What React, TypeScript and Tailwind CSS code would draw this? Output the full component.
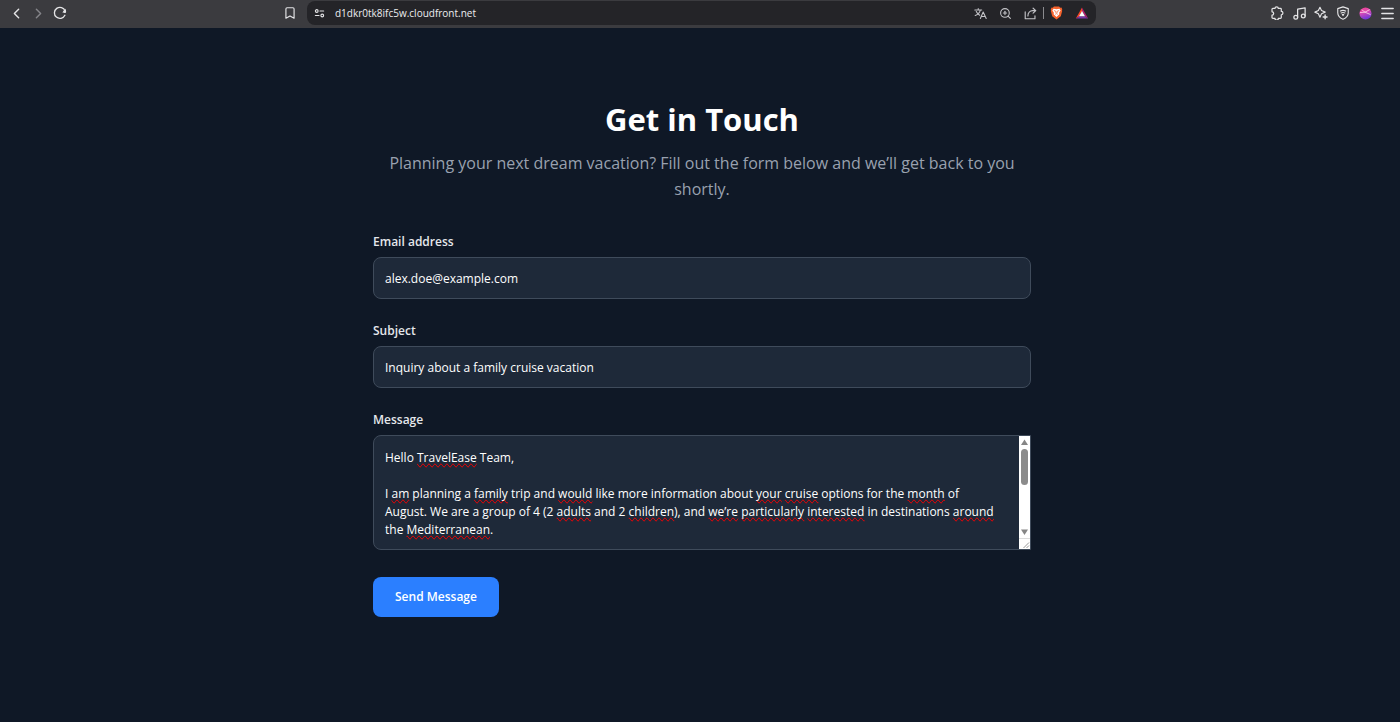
import { useRef, useState } from "react";
import {
  Bookmark,
  ChevronLeft,
  ChevronRight,
  Menu,
  Music,
  ZoomIn,
} from "lucide-react";

const iconButton = "flex h-6 w-[22px] items-center justify-center";
const barButton = "flex h-6 w-[25px] items-center justify-center";
const inputStyle =
  "block h-[42px] w-full rounded-lg border border-[#3f4b5b] bg-[#1e2939] px-[11px] text-[12px] text-white outline-none focus:border-blue-500";
const labelStyle = "mb-[5px] block text-[12px] leading-5 font-semibold text-gray-200";

// "*" marks the words that the spell checker underlines
const messageMarkup = `Hello *TravelEase* Team,

I *am* planning a *family* trip and *would* like more information about *your* *cruise* options for the *month* of August. We are a group of 4 (2 *adults* and 2 *children*), and *we’re* *particularly* *interested* in destinations *around* the *Mediterranean*.`;

const initialMessage = messageMarkup.replaceAll("*", "");
const flagged = messageMarkup.split("*").filter((_, i) => i % 2 === 1);

function ReloadIcon() {
  return (
    <svg viewBox="0 0 16 16" className="h-[14px] w-[14px]" fill="none" stroke="currentColor" strokeWidth="1.5" strokeLinecap="round">
      <path d="M13.6 10.6A6.3 6.3 0 1 1 13.8 5.6" />
      <path d="M14.7 3.2v4.1h-4.1z" fill="currentColor" stroke="none" />
      <circle cx="13.4" cy="6.5" r="1.6" fill="currentColor" stroke="none" />
    </svg>
  );
}

function SiteSettingsIcon() {
  return (
    <svg viewBox="0 0 12 12" className="h-[11px] w-[11px]" fill="none" stroke="currentColor" strokeWidth="1.2" strokeLinecap="round">
      <circle cx="3" cy="3.3" r="1.5" />
      <path d="M6.5 3.3h4" />
      <circle cx="9" cy="8.2" r="1.5" />
      <path d="M1.5 8.2h4" />
    </svg>
  );
}

function TranslateIcon() {
  return (
    <svg viewBox="0 0 16 16" className="h-[13px] w-[13px]" fill="none" stroke="currentColor" strokeWidth="1.3" strokeLinecap="round" strokeLinejoin="round">
      <path d="M1 3.8h8.5M5.2 2v1.8M7.8 3.8C7 7 4.5 9.3 1.5 10.4M2.8 5.6c1 2.2 2.4 3.6 4.2 4.6" />
      <path d="M7.8 14.2l3.5-8 3.7 8M9 11.6h4.7" />
    </svg>
  );
}

function ShareIcon() {
  return (
    <svg viewBox="0 0 16 16" className="h-[13px] w-[13px]" fill="none" stroke="currentColor" strokeWidth="1.4" strokeLinecap="round" strokeLinejoin="round">
      <path d="M1.5 6v8.5h12V11" />
      <path d="M4.8 11c0-4 2.5-6.5 6-6.5H14M11.2 1.5l3.3 3-3.3 3" />
    </svg>
  );
}

function BraveIcon() {
  return (
    <svg viewBox="0 0 14 16" className="h-[14px] w-[13px]">
      <path d="M4 .7h6l1.2 1.2 1.4-.1 1 2-.4 1 .3 1-1.6 6L7 15.5 2.1 11.8.5 5.8l.3-1-.4-1 1-2 1.4.1z" fill="#f4622c" />
      <path d="M3.6 3.2 7 3.8l3.4-.6 1.3 2-1.7 2.6.3 1.5L7 12.6 3.7 9.3 4 7.8 2.3 5.2z" fill="#fff" />
      <path d="M4 5.2l2.1.7.3 2.2M10 5.2l-2.1.7-.3 2.2M5.5 9.5 7 8.7l1.5.8" fill="none" stroke="#f4622c" strokeWidth=".8" />
    </svg>
  );
}

function BatIcon() {
  return (
    <svg viewBox="0 0 16 14" className="h-3 w-[14px]">
      <path d="M8 .5V5L4.6 10.8.8 13.3z" fill="#ff4724" />
      <path d="M8 .5 15.2 13.3 11.4 10.8 8 5z" fill="#b0206e" />
      <path d="M.8 13.3l3.8-2.5h6.8l3.8 2.5z" fill="#7a35a5" />
      <path d="M8 4.8l3.5 6.1h-7z" fill="#fff" />
    </svg>
  );
}

function ExtensionsIcon() {
  return (
    <svg viewBox="0 0 16 16" className="h-[14px] w-[14px]" fill="none" stroke="currentColor" strokeWidth="1.4" strokeLinejoin="round">
      <path d="M3.3 2.8h2.4a1.9 1.9 0 0 1 3.8 0h2.4a1 1 0 0 1 1 1v2.4a1.9 1.9 0 0 1 0 3.8v3.2a1 1 0 0 1-1 1H9.5a1.9 1.9 0 0 1-3.8 0H3.3a1 1 0 0 1-1-1V10.400a1.9 1.9 0 0 0 0-3.800V3.8a1 1 0 0 1 1-1z" />
    </svg>
  );
}

function LeoIcon() {
  return (
    <svg viewBox="0 0 16 16" className="h-[14px] w-[14px]" fill="none" stroke="currentColor" strokeWidth="1.3" strokeLinejoin="round" strokeLinecap="round">
      <path d="M6.8 1.5 8.6 5.2 12.8 7l-4.2 1.800L6.8 12.8 5 8.8 1 7l4-1.8z" />
      <path d="M12.7 10.3v4.4M10.5 12.5h4.4" strokeWidth="1.6" />
    </svg>
  );
}

function VpnIcon() {
  return (
    <svg viewBox="0 0 16 16" className="h-[14px] w-[14px]" fill="none" stroke="currentColor" strokeWidth="1.3" strokeLinecap="round" strokeLinejoin="round">
      <path d="M8 1l6 2v4.6c0 3.5-2.5 6-6 7.6-3.5-1.6-6-4.1-6-7.6V3z" />
      <path d="M5 5.8c1.9-1 4.1-1 6 0M5.9 8c1.3-.7 2.9-.7 4.2 0" />
      <path d="M7.2 9.8h1.6L8 10.7z" />
    </svg>
  );
}

function ProfileIcon() {
  return (
    <svg viewBox="0 0 14 14" className="h-[13px] w-[13px]">
      <defs>
        <linearGradient id="profile" x1="0" y1="0" x2="0.3" y2="1">
          <stop offset="0" stopColor="#f0408c" />
          <stop offset="0.45" stopColor="#e04bb4" />
          <stop offset="1" stopColor="#7438d8" />
        </linearGradient>
      </defs>
      <circle cx="7" cy="7" r="6.5" fill="url(#profile)" />
      <path d="M1 6 6.5 5.6l5-2.8M3 3l3.5 2.6 6 2.6" fill="none" stroke="#fbd0ea" strokeWidth=".9" />
    </svg>
  );
}

function BrowserBar() {
  return (
    <header className="flex h-7 items-center bg-[#3b3b3f] pb-0.5 text-[#e4e4e6]">
      <div className="flex w-[307px] shrink-0 items-center justify-between pr-[6px] pl-[5px]">
        <div className="flex">
          <button aria-label="Back" className={iconButton}>
            <ChevronLeft size={17} strokeWidth={2} />
          </button>
          <button aria-label="Forward" className={`${iconButton} text-[#85858a]`}>
            <ChevronRight size={17} strokeWidth={2} />
          </button>
          <button aria-label="Reload" className={iconButton}>
            <ReloadIcon />
          </button>
        </div>
        <button aria-label="Bookmark" className={iconButton}>
          <Bookmark size={14} strokeWidth={2} />
        </button>
      </div>

      <div className="flex h-6 min-w-0 flex-1 items-center rounded-lg bg-[#242428] pr-[2px]">
        <button aria-label="Site settings" className="flex h-6 w-6 items-center justify-center">
          <SiteSettingsIcon />
        </button>
        <input
          aria-label="Address"
          defaultValue="d1dkr0tk8ifc5w.cloudfront.net"
          className="min-w-0 flex-1 bg-transparent pl-1 text-[10px] text-[#ededef] outline-none"
        />
        <div className="flex items-center text-[#c4c4c8]">
          <button aria-label="Translate" className={barButton}>
            <TranslateIcon />
          </button>
          <button aria-label="Zoom" className={barButton}>
            <ZoomIn size={13} strokeWidth={2} />
          </button>
          <button aria-label="Share" className={barButton}>
            <ShareIcon />
          </button>
          <span className="h-3 w-px bg-[#8a8a8e]" />
          <button aria-label="Brave Shields" className={barButton}>
            <BraveIcon />
          </button>
          <button aria-label="Brave Rewards" className={barButton}>
            <BatIcon />
          </button>
        </div>
      </div>

      <div className="flex w-[304px] shrink-0 justify-end pr-[2px]">
        <button aria-label="Extensions" className={iconButton}>
          <ExtensionsIcon />
        </button>
        <button aria-label="Playlist" className={iconButton}>
          <Music size={15} strokeWidth={2} />
        </button>
        <button aria-label="Assistant" className={iconButton}>
          <LeoIcon />
        </button>
        <button aria-label="VPN" className={iconButton}>
          <VpnIcon />
        </button>
        <button aria-label="Profile" className={iconButton}>
          <ProfileIcon />
        </button>
        <button aria-label="Menu" className={iconButton}>
          <Menu size={17} strokeWidth={2} />
        </button>
      </div>
    </header>
  );
}

function MessageField() {
  const [message, setMessage] = useState(initialMessage);
  const backdrop = useRef<HTMLDivElement>(null);

  const handleScroll = (e: React.UIEvent<HTMLTextAreaElement>) => {
    if (backdrop.current) backdrop.current.scrollTop = e.currentTarget.scrollTop;
  };

  return (
    <div>
      <label htmlFor="message" className={labelStyle}>
        Message
      </label>
      <div className="relative flex h-[115px] overflow-hidden rounded-l-lg border border-[#3f4b5b] bg-[#1e2939]">
        <div className="relative min-w-0 flex-1">
          {/* spell check marks, scrolled together with the textarea */}
          <div
            ref={backdrop}
            aria-hidden="true"
            className="pointer-events-none absolute inset-0 overflow-hidden pt-[13px] pr-[18px] pb-2 pl-[11px] text-[12px] leading-[18px] break-words whitespace-pre-wrap text-transparent select-none"
          >
            {message.split(/([\s(),.]+)/).map((word, i) =>
              flagged.includes(word) ? (
                <span key={i} className="[text-decoration-line:spelling-error]">
                  {word}
                </span>
              ) : (
                word
              )
            )}
          </div>
          <textarea
            id="message"
            name="message"
            value={message}
            spellCheck={false}
            onChange={(e) => setMessage(e.target.value)}
            onScroll={handleScroll}
            className="relative block h-full w-full resize-none bg-transparent pt-[13px] pr-[18px] pb-2 pl-[11px] text-[12px] leading-[18px] text-white outline-none [scrollbar-width:none]"
          />
        </div>
        <div aria-hidden="true" className="flex w-[11px] flex-col items-center bg-white">
          <svg viewBox="0 0 11 12" className="h-3 w-[11px]">
            <path d="M5.5 3.5 9 9H2z" fill="#868686" />
          </svg>
          <div className="mt-px h-9 w-[7px] rounded-full bg-[#8b8b8b]" />
          <div className="flex-1" />
          <svg viewBox="0 0 11 12" className="h-3 w-[11px]">
            <path d="M5.5 9 2 3.5h7z" fill="#868686" />
          </svg>
          <svg viewBox="0 0 11 11" className="h-[11px] w-[11px]">
            <path d="M0 .5h11" stroke="#dcdcdc" />
            <path d="M4.5 10l5.5-5.5M7.5 10 10 7.5" stroke="#999" />
          </svg>
        </div>
      </div>
    </div>
  );
}

export default function App() {
  const [email, setEmail] = useState("alex.doe@example.com");
  const [subject, setSubject] = useState("Inquiry about a family cruise vacation");

  return (
    <div className="min-h-screen bg-[#0f1826] font-['Open_Sans','Noto_Sans',sans-serif]">
      <BrowserBar />
      <main className="pt-[73px] pb-20 pl-1">
        <section className="mx-auto max-w-[658px]">
          <div className="mb-[30px] text-center">
            <h1 className="text-[31px] leading-9 font-bold text-white">Get in Touch</h1>
            <p className="mt-[13px] text-[16px] leading-[26px] text-gray-400">
              Planning your next dream vacation? Fill out the form below and we’ll get back to you shortly.
            </p>
          </div>

          <form className="flex flex-col gap-[22px]" onSubmit={(e) => e.preventDefault()}>
            <div>
              <label htmlFor="email" className={labelStyle}>
                Email address
              </label>
              <input
                id="email"
                type="email"
                value={email}
                onChange={(e) => setEmail(e.target.value)}
                className={inputStyle}
              />
            </div>
            <div>
              <label htmlFor="subject" className={labelStyle}>
                Subject
              </label>
              <input
                id="subject"
                type="text"
                value={subject}
                onChange={(e) => setSubject(e.target.value)}
                className={inputStyle}
              />
            </div>
            <MessageField />
            <div className="pt-[5px]">
              <button
                type="submit"
                className="h-10 rounded-lg bg-[#2b7fff] px-[22px] text-[12px] font-semibold text-white hover:bg-blue-600"
              >
                Send Message
              </button>
            </div>
          </form>
        </section>
      </main>
    </div>
  );
}
